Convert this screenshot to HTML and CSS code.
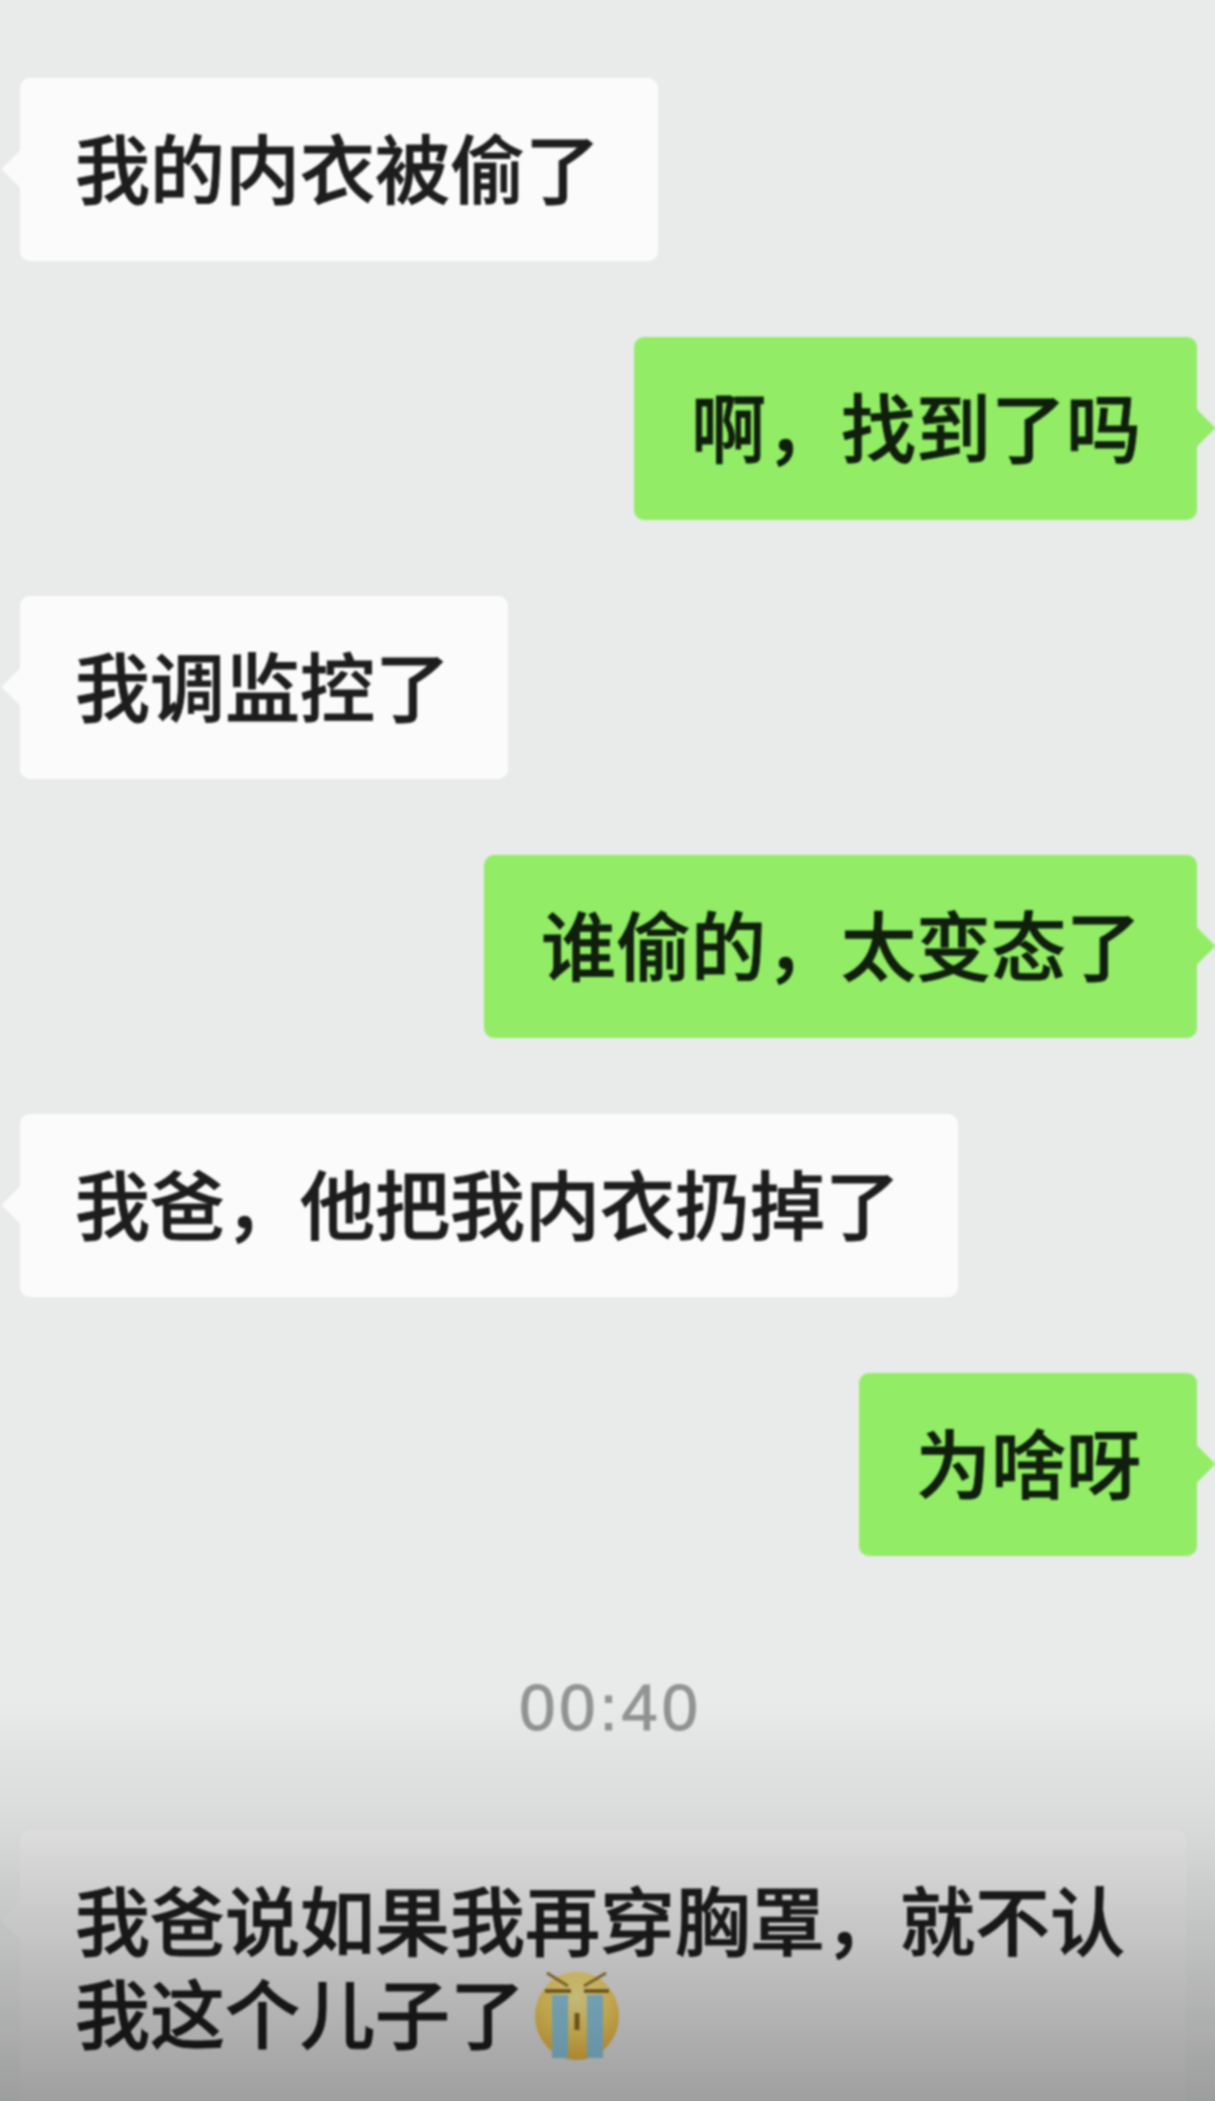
FILE: index.html
```html
<!DOCTYPE html>
<html lang="zh-CN">
<head>
  <meta charset="UTF-8">
  <title>聊天记录</title>
  <link rel="stylesheet" href="styles.css">
</head>
<body>
  <div class="chat">
    <div class="bubble left">我的内衣被偷了</div>
    <div class="bubble right">啊，找到了吗</div>
    <div class="bubble left">我调监控了</div>
    <div class="bubble right">谁偷的，太变态了</div>
    <div class="bubble left">我爸，他把我内衣扔掉了</div>
    <div class="bubble right">为啥呀</div>
    <div class="time">00:40</div>
    <div class="bubble left last">我爸说如果我再穿胸罩，就不认我这个儿子了<svg class="cry" viewBox="0 0 84 89" aria-hidden="true">
        <defs>
          <radialGradient id="face" cx="50%" cy="30%" r="70%">
            <stop offset="0" stop-color="#fff2a0"/>
            <stop offset="0.6" stop-color="#fbd862"/>
            <stop offset="1" stop-color="#f2bc44"/>
          </radialGradient>
        </defs>
        <ellipse cx="42" cy="45" rx="42" ry="44" fill="url(#face)"/>
        <rect x="17" y="24" width="16" height="63" fill="#94cfe6"/>
        <rect x="52" y="24" width="16" height="63" fill="#94cfe6"/>
        <path d="M12 2 33 15M71 2 49 15" stroke="#9a7d32" stroke-width="3" fill="none"/>
        <path d="M10 20H36M49 20H74" stroke="#7d662a" stroke-width="3.5" fill="none"/>
        <path d="M42 42V59" stroke="#946c20" stroke-width="5" fill="none"/>
      </svg></div>
  </div>
  <!-- 底部变暗 -->
  <div class="shade"></div>
</body>
</html>
```

FILE: styles.css
```css
*{
  margin: 0;
  padding: 0;
  box-sizing: border-box;
}
html, body{
  height: 2101px;
  overflow: hidden;
}
body{
  position: relative;
  background: #e9ebea;
  font-family: "Noto Sans CJK SC", "Liberation Sans", sans-serif;
  color: #1d1d1d;
}

.chat{
  display: flex;
  flex-direction: column;
  align-items: flex-start;
  gap: 76px;
  height: 2101px;
  padding: 78px 18px 0 20px;
  filter: blur(1px);
}

.bubble{
  position: relative;
  padding: 41px 58px 49px 55px;
  font-size: 75px;
  font-weight: 500;
  line-height: 93px;
  border-radius: 10px;
  -webkit-text-stroke: 0.9px currentColor;
}
.left{
  background: #fbfbfb;
}
.right{
  align-self: flex-end;
  padding-left: 57px;
  padding-right: 56px;
  background: #92ec66;
  color: #0f1f0c;
}

/* 气泡的小尖角 */
.bubble::before{
  content: "";
  position: absolute;
  top: 78px;
  width: 26px;
  height: 26px;
  background: inherit;
  transform: rotate(45deg);
}
.left::before{
  left: -13px;
}
.right::before{
  right: -13px;
}

.time{
  align-self: center;
  margin: 30px 0 0 4px;
  height: 92px;
  font-family: "Liberation Sans", sans-serif;
  font-size: 65px;
  line-height: 92px;
  letter-spacing: 4px;
  color: #929494;
  -webkit-text-stroke: 1px currentColor;
}

.last{
  flex: none;
  width: 1166px;
  height: 320px;
  background: #eeeeee;
  padding-right: 40px;
  filter: blur(0.5px);
}

.cry{
  display: inline-block;
  width: 84px;
  height: 89px;
  margin-left: 10px;
  vertical-align: -17px;
}

.shade{
  position: absolute;
  left: 0;
  right: 0;
  top: 1700px;
  bottom: 0;
  background: linear-gradient(rgba(0,0,0,0), rgba(0,0,0,0.07) 32%, rgba(0,0,0,0.33));
  pointer-events: none;
}
```
